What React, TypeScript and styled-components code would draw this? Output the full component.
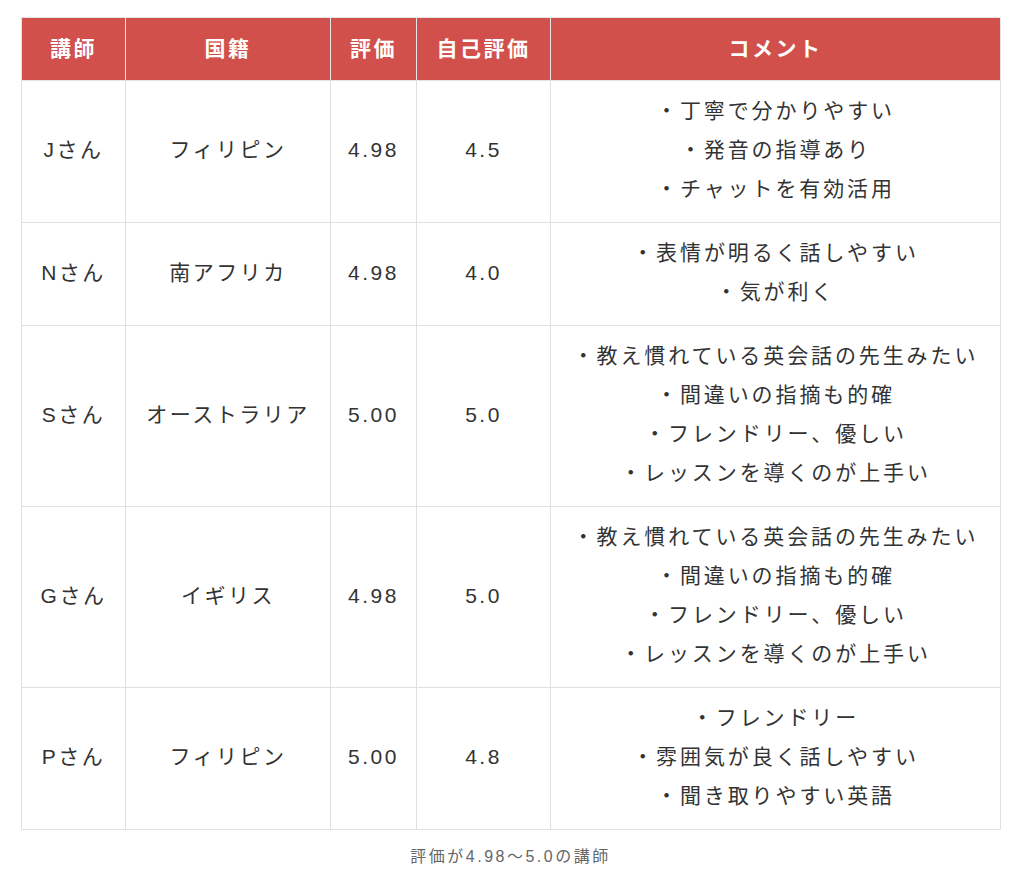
import React from "react";
import styled, { createGlobalStyle } from "styled-components";

const GlobalStyle = createGlobalStyle`
  html, body { margin: 0; padding: 0; background: #ffffff; }
  body {
    font-family: "Liberation Sans", "Noto Sans CJK JP", sans-serif;
    color: #333333;
  }
`;

const Page = styled.div`
  padding: 17px 24px 0 21px;
  width: 1024px;
  box-sizing: border-box;
`;

const Figure = styled.figure`
  margin: 0;
`;

const Table = styled.table`
  width: 979px;
  border-collapse: collapse;
  table-layout: fixed;
  letter-spacing: 2.5px;
`;

const HeadCell = styled.th`
  background: #d1504b;
  color: #ffffff;
  font-weight: 700;
  font-size: 21px;
  line-height: 38px;
  padding: 12px 0;
  border: 1px solid #e4e4e4;
  text-align: center;
  vertical-align: middle;
`;

const Cell = styled.td<{ $wide?: boolean }>`
  font-size: 21px;
  line-height: 39px;
  padding: 10px 0 14px;
  border: 1px solid #e0e0e0;
  text-align: center;
  vertical-align: middle;
  color: #333333;
  letter-spacing: ${(p) => (p.$wide ? "2.9px" : "2.5px")};
`;

const Line = styled.div`
  white-space: nowrap;
`;

const Caption = styled.figcaption`
  margin-top: 13px;
  text-align: center;
  font-size: 16px;
  letter-spacing: 2.5px;
  color: #666666;
  width: 979px;
`;

type Row = {
  name: string;
  country: string;
  score: string;
  self: string;
  comments: string[];
};

const rows: Row[] = [
  {
    name: "Jさん",
    country: "フィリピン",
    score: "4.98",
    self: "4.5",
    comments: ["・丁寧で分かりやすい", "・発音の指導あり", "・チャットを有効活用"],
  },
  {
    name: "Nさん",
    country: "南アフリカ",
    score: "4.98",
    self: "4.0",
    comments: ["・表情が明るく話しやすい", "・気が利く"],
  },
  {
    name: "Sさん",
    country: "オーストラリア",
    score: "5.00",
    self: "5.0",
    comments: [
      "・教え慣れている英会話の先生みたい",
      "・間違いの指摘も的確",
      "・フレンドリー、優しい",
      "・レッスンを導くのが上手い",
    ],
  },
  {
    name: "Gさん",
    country: "イギリス",
    score: "4.98",
    self: "5.0",
    comments: [
      "・教え慣れている英会話の先生みたい",
      "・間違いの指摘も的確",
      "・フレンドリー、優しい",
      "・レッスンを導くのが上手い",
    ],
  },
  {
    name: "Pさん",
    country: "フィリピン",
    score: "5.00",
    self: "4.8",
    comments: ["・フレンドリー", "・雰囲気が良く話しやすい", "・聞き取りやすい英語"],
  },
];

export default function App() {
  return (
    <>
      <GlobalStyle />
      <Page>
        <Figure>
          <Table>
            <colgroup>
              <col style={{ width: 104 }} />
              <col style={{ width: 205 }} />
              <col style={{ width: 86 }} />
              <col style={{ width: 134 }} />
              <col style={{ width: 450 }} />
            </colgroup>
            <thead>
              <tr>
                <HeadCell>講師</HeadCell>
                <HeadCell>国籍</HeadCell>
                <HeadCell>評価</HeadCell>
                <HeadCell>自己評価</HeadCell>
                <HeadCell>コメント</HeadCell>
              </tr>
            </thead>
            <tbody>
              {rows.map((r) => (
                <tr key={r.name}>
                  <Cell>{r.name}</Cell>
                  <Cell>{r.country}</Cell>
                  <Cell>{r.score}</Cell>
                  <Cell>{r.self}</Cell>
                  <Cell $wide>
                    {r.comments.map((c) => (
                      <Line key={c}>{c}</Line>
                    ))}
                  </Cell>
                </tr>
              ))}
            </tbody>
          </Table>
          <Caption>評価が4.98〜5.0の講師</Caption>
        </Figure>
      </Page>
    </>
  );
}
